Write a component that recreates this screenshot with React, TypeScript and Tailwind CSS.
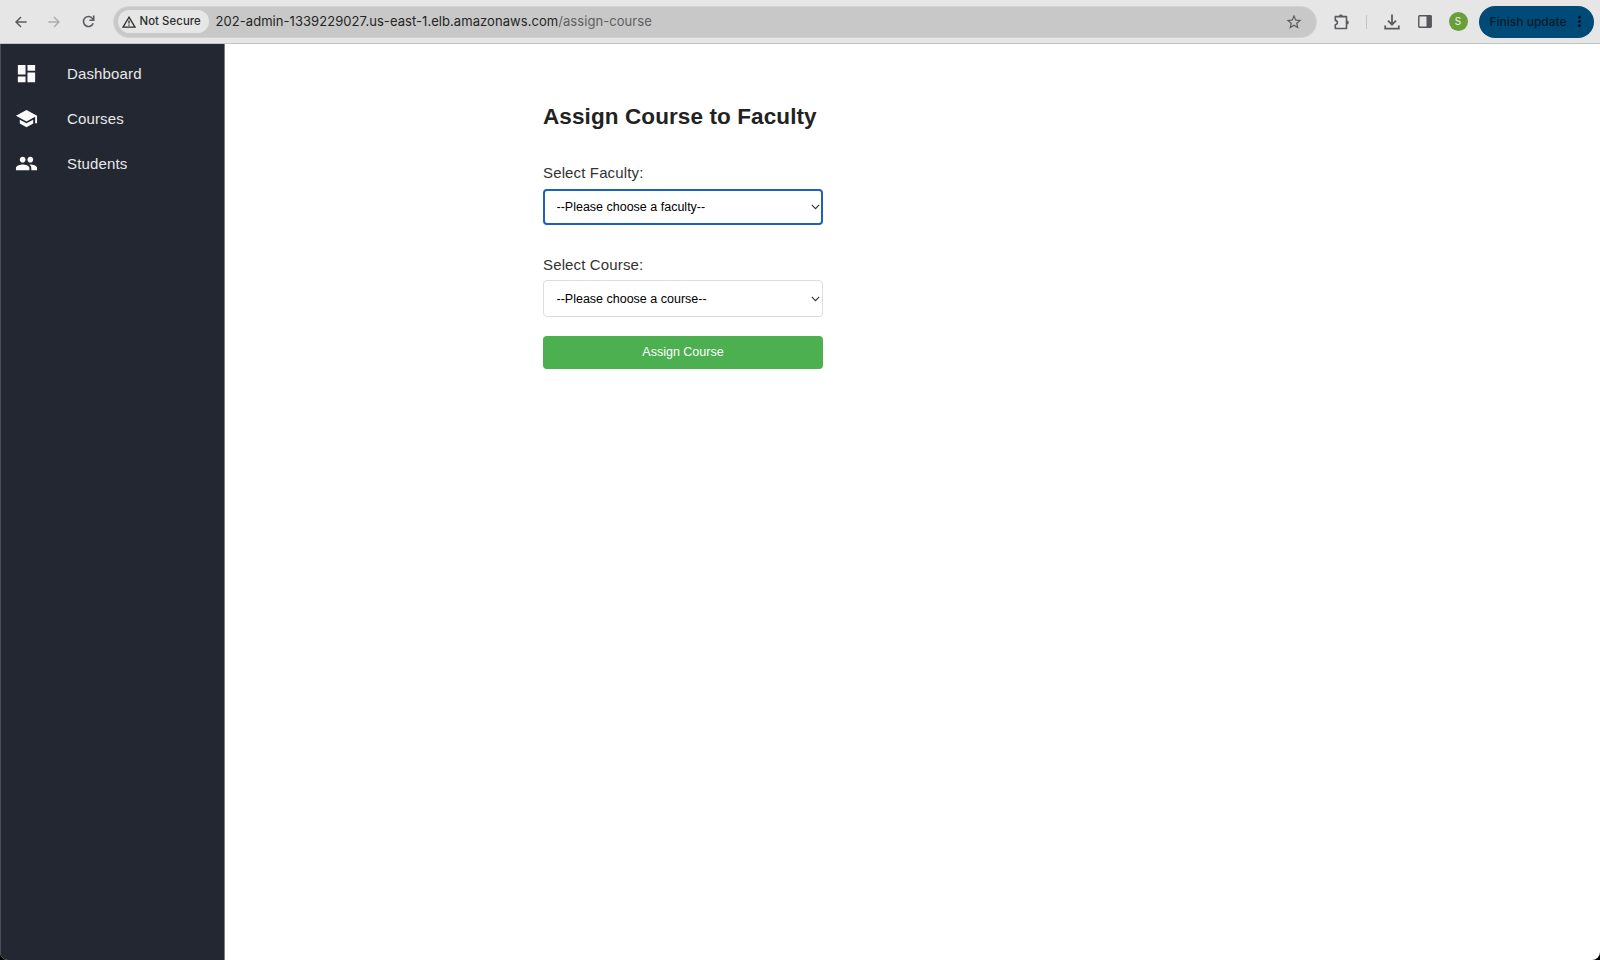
import type { ReactNode } from "react";
import { MdDashboard, MdMoreVert, MdPeople, MdSchool, MdStarBorder } from "react-icons/md";

const navItems = [
  { label: "Dashboard", icon: MdDashboard },
  { label: "Courses", icon: MdSchool },
  { label: "Students", icon: MdPeople },
];

function ArrowIcon({ forward }: { forward?: boolean }) {
  return (
    <svg width="12" height="12" viewBox="0 0 12 12" fill="none" stroke="currentColor" strokeWidth="1.5">
      <path d={forward ? "M0.4 6h10.4M6 1l5 5-5 5" : "M11.6 6H1.2M6 1 1 6l5 5"} />
    </svg>
  );
}

function ReloadIcon() {
  return (
    <svg width="13" height="13" viewBox="0 0 13 13" fill="none" stroke="currentColor" strokeWidth="1.6">
      <path d="M11.2 8.2a5 5 0 1 1-0.6-4.6l1 1.2" />
      <path d="M11.7 0.6v4.6H7.4" />
    </svg>
  );
}

function WarningIcon() {
  return (
    <svg width="14" height="12" viewBox="0 0 14 12" fill="none" stroke="#2e2e2e" strokeWidth="1.3">
      <path d="M7 1.2 13 11.2H1z" strokeLinejoin="miter" />
      <path d="M7 4.6v3M7 8.4v1.3" />
    </svg>
  );
}

function ExtensionIcon() {
  return (
    <svg width="16" height="16" viewBox="0 0 16 16" fill="none" stroke="#5a5c5f" strokeWidth="1.6" strokeLinejoin="round">
      <path d="M1.3 2.6h11.2v11.9H1.3v-3.8c2.8-0.4 2.8-3.9 0-4.3z" />
      <path d="M5.3 2.4a1.6 1.6 0 0 1 3.2 0zM12.9 6.9a1.6 1.6 0 0 1 0 3.2z" fill="#5a5c5f" strokeWidth="0.8" />
    </svg>
  );
}

function DownloadIcon() {
  return (
    <svg width="16" height="16" viewBox="0 0 16 16" fill="none" stroke="#595b5e" strokeWidth="1.8">
      <path d="M8 0.5v10M4 6.7l4 4 4-4M1.2 11.5v3.2h13.6v-3.2" />
    </svg>
  );
}

function SidePanelIcon() {
  return (
    <svg width="14" height="13" viewBox="0 0 14 13">
      <rect x="0.8" y="0.8" width="12.4" height="11.4" rx="0.6" fill="none" stroke="#55575a" strokeWidth="1.4" />
      <path d="M8.5 0.8h4.7v11.4H8.5z" fill="#55575a" />
    </svg>
  );
}

function Toolbar() {
  return (
    <header className="flex h-11 shrink-0 items-center border-b border-[#c3c3c3] bg-[#e6e6e6] text-[#5a5c5f]">
      <div className="ml-[15px]">
        <ArrowIcon />
      </div>
      <div className="ml-[21px] text-[#adadad]">
        <ArrowIcon forward />
      </div>
      <div className="ml-[22px]">
        <ReloadIcon />
      </div>
      <div className="ml-[17.5px] flex h-8 w-[1204.5px] items-center rounded-full border border-[#d2d2d2] bg-[#c8c8c8] pl-[4px] pr-[13px]">
        <div className="flex h-[23px] w-[91px] shrink-0 items-center rounded-full bg-[#e6e6e6] pl-[4px]">
          <WarningIcon />
          <span className="ml-1 whitespace-nowrap text-[11.3px] font-medium tracking-[0.1px] text-[#2b2b2b]">Not Secure</span>
        </div>
        <span className="ml-[7px] flex-1 whitespace-nowrap text-[13px] tracking-[0.06px] text-[#252525]">
          202-admin-1339229027.us-east-1.elb.amazonaws.com<span className="text-[#606060]">/assign-course</span>
        </span>
        <MdStarBorder className="size-[18px]" />
      </div>
      <div className="ml-[16.5px]">
        <ExtensionIcon />
      </div>
      <div className="ml-[16px] h-[14px] w-px bg-[#c4c4c4]" />
      <div className="ml-[17px]">
        <DownloadIcon />
      </div>
      <div className="ml-[18px]">
        <SidePanelIcon />
      </div>
      <div className="ml-[17px] flex size-[19px] items-center justify-center rounded-full bg-[#689f38] text-[10px] text-[#eef5e8]">
        S
      </div>
      <div className="ml-[11px] flex h-8 w-[115px] items-center rounded-full bg-[#004a77] pl-[11px] text-[#061a2b]">
        <span className="whitespace-nowrap text-[12px] font-medium">Finish update</span>
        <MdMoreVert className="ml-[4px] size-[17px] text-[#02101c]" />
      </div>
    </header>
  );
}

function Field({ label, focused, children }: { label: string; focused?: boolean; children: ReactNode }) {
  return (
    <label className="block">
      <span
        className={
          focused
            ? "block h-[27px] text-[15px] leading-[21px] tracking-[0.14px] text-[#333333]"
            : "block h-[27px] text-[15px] leading-[23px] tracking-[0.14px] text-[#333333]"
        }
      >
        {label}
      </span>
      <span className="grid items-center">
        <select
          className={
            focused
              ? "col-start-1 row-start-1 h-[36px] w-full appearance-none rounded-[4px] border-2 border-[#1a63b8] bg-white pl-[11.5px] text-[12.5px] text-black outline-none"
              : "col-start-1 row-start-1 h-[37px] w-full appearance-none rounded-[4px] border border-[#dcdcdc] bg-white pl-[12.5px] pt-px text-[12.5px] text-black outline-none"
          }
        >
          {children}
        </select>
        <svg
          className="pointer-events-none col-start-1 row-start-1 mr-[3px] justify-self-end"
          width="9"
          height="6"
          viewBox="0 0 9 6"
          fill="none"
          stroke="#333"
          strokeWidth="1.1"
        >
          <path d="M0.8 0.8 4.5 4.6 8.2 0.8" />
        </svg>
      </span>
    </label>
  );
}

export default function App() {
  return (
    <div className="h-[960px] w-[1600px] bg-black">
      <div className="flex h-full flex-col overflow-hidden rounded-b-[8px] bg-white font-['Inter',sans-serif]">
        <Toolbar />
        <div className="flex flex-1 font-['Liberation_Sans',Arial,sans-serif]">
          <nav className="w-[225px] border-x border-l-[#4a4e58] border-r-[#7a7d84] bg-[#232731] pt-[7px]">
            {navItems.map(({ label, icon: Icon }) => (
              <a key={label} className="flex h-[45px] items-center pl-[14px] text-[#fafafa]">
                <Icon className="size-[23px]" />
                <span className="ml-[29px] pt-[2px] text-[15px] tracking-[0.14px] text-[#e8e9ea]">{label}</span>
              </a>
            ))}
          </nav>
          <main className="ml-[318px] w-[280px] pt-[58px]">
            <h1 className="h-[60px] whitespace-nowrap text-[22.5px] leading-[30px] font-bold tracking-[0.1px] text-[#222222]">
              Assign Course to Faculty
            </h1>
            <Field label="Select Faculty:" focused>
              <option>--Please choose a faculty--</option>
            </Field>
            <div className="h-7" />
            <Field label="Select Course:">
              <option>--Please choose a course--</option>
            </Field>
            <button className="mt-[19px] h-[33px] w-full rounded-[4px] bg-[#4caf50] text-[12.5px] text-white">
              Assign Course
            </button>
          </main>
        </div>
      </div>
    </div>
  );
}
